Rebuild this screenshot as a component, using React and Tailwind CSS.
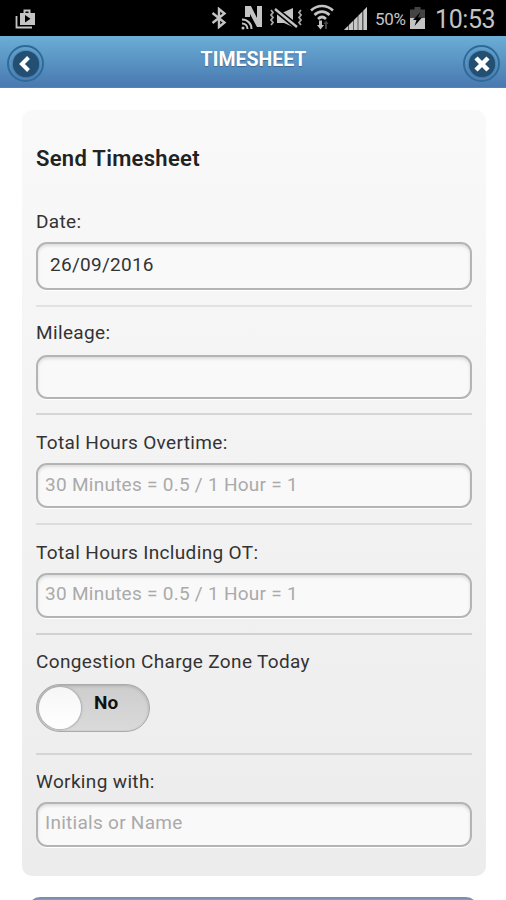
const BluetoothIcon = () => (
  <svg className="w-[16px] h-[22px]" viewBox="0 0 16 22" fill="none" stroke="#c4c4c4" strokeWidth="2.400">
    <path d="M1.500 6 L13.500 15.500 L8 20 V2 L13.500 6.500 L1.500 16" />
  </svg>
);

const NfcIcon = () => (
  <svg className="w-[22px] h-[25px]" viewBox="0 0 22 25">
    <path d="M4 1h6l6 12V1h5v21h-5L9 9v3H4z" fill="#c4c4c4" />
    <g fill="none" stroke="#c4c4c4" strokeWidth="2">
      <path d="M1 14.500c5.500 0 9.500 4 9.500 9.500" />
      <path d="M1 18.500c3.300 0 5.500 2.200 5.500 5.500" />
    </g>
    <circle cx="2" cy="23" r="1.500" fill="#c4c4c4" />
  </svg>
);

const VibrateIcon = () => (
  <svg className="w-[34px] h-[22px]" viewBox="0 0 34 22">
    <path d="M8 4h7l9-4v19l-9-4H8z" fill="#c4c4c4" />
    <path d="M6 1l22 18" stroke="#000" strokeWidth="5.500" />
    <path d="M6 1l22 18" stroke="#c4c4c4" strokeWidth="2.400" />
    <g fill="none" stroke="#a8a8a8" strokeWidth="1.800">
      <path d="M2 2l2 2.500-2 2.500 2 2.500-2 2.500 2 2.500-2 2.500" />
      <path d="M32 2l-2 2.500 2 2.500-2 2.500 2 2.500-2 2.500 2 2.500" />
    </g>
  </svg>
);

const WifiIcon = () => (
  <svg className="w-[24px] h-[26px]" viewBox="0 0 24 26">
    <g fill="none" stroke="#c4c4c4" strokeWidth="2.600">
      <path d="M1 6.500c6.500-6 15.500-6 22 0" />
      <path d="M4.500 11c4.500-4.500 10.500-4.500 15 0" />
      <path d="M8 15c2.500-2.500 5.500-2.500 8 0" />
    </g>
    <path d="M9 16.500h3v4.500h2l-3.500 4.500L7 21h2z" fill="#c4c4c4" />
    <path d="M15 25v-5h-1.500l2.500-3.500 2.500 3.500H17v5z" fill="#444" />
  </svg>
);

const SignalIcon = () => (
  <svg className="w-[24px] h-[24px]" viewBox="0 0 24 24">
    <path d="M0 23L23 0v23z" fill="#5c5c5c" />
    <path d="M0 23l4-4v4zM5 18l4-4v9H5zM10 13l3.500-3.500V23H10zM14.500 8.500L18 5v18h-3.500zM19.500 3.500L23 0v23h-3.500z" fill="#c8c8c8" />
  </svg>
);

const BatteryIcon = () => (
  <svg className="w-[15px] h-[22px]" viewBox="0 0 15 22">
    <path d="M4.500 0h6v2.500H15V11H0V2.500h4.500z" fill="#444" />
    <path d="M0 11h15v11H0z" fill="#c4c4c4" />
    <path d="M10.500 5L3 13h3.500l-2 6 7.500-8.500H8z" fill="#000" />
  </svg>
);

const MediaIcon = () => (
  <svg className="w-[21px] h-[21px]" viewBox="0 0 21 21">
    <path d="M1.500 7v11.500h15.500" fill="none" stroke="#c4c4c4" strokeWidth="1.800" />
    <path d="M9.500 4V1.500h5V4" fill="none" stroke="#c4c4c4" strokeWidth="2" />
    <path d="M5 4h15v12H5z" fill="#c4c4c4" />
    <path d="M10 6v7.500l5.500-3.800z" fill="#000" />
  </svg>
);

const StatusBar = () => (
  <div className="flex h-[36px] items-start bg-black pl-[15px] text-[#c4c4c4]">
    <div className="pt-[9px]"><MediaIcon /></div>
    <div className="ml-[175px] pt-[7px]"><BluetoothIcon /></div>
    <div className="ml-[14px] pt-[5px]"><NfcIcon /></div>
    <div className="ml-[6px] pt-[8px]"><VibrateIcon /></div>
    <div className="ml-[7px] pt-[4px]"><WifiIcon /></div>
    <div className="ml-[10px] pt-[7px]"><SignalIcon /></div>
    <span className="ml-[7px] w-[31px] pt-[7px] text-[17px] leading-[24px] tracking-[-0.3px] whitespace-nowrap">50%</span>
    <div className="ml-[4px] pt-[7px]"><BatteryIcon /></div>
    <span className="ml-[10px] pt-[5px] text-[25px] leading-[30px] tracking-[-0.4px]">10:53</span>
  </div>
);

const RoundButton = ({ label, children }) => (
  <button aria-label={label} className="flex size-[37px] items-center justify-center rounded-full border-2 border-[#2f6b98]">
    <span className="flex size-[26px] items-center justify-center rounded-full bg-[#234f72] shadow-[0_0_2px_#234f72]">
      {children}
    </span>
  </button>
);

const Header = () => (
  <div className="flex h-[52px] justify-between border-b border-[#5b82ab] bg-linear-to-b from-[#6baed6] to-[#4979b0] pl-[7px] pr-[6px] pt-[9px]">
    <RoundButton label="Back">
      <svg className="size-[18px]" viewBox="0 0 18 18" fill="none" stroke="#fff" strokeWidth="4">
        <path d="M11.500 2.500L5 9l6.500 6.500" />
      </svg>
    </RoundButton>
    <h1 className="pt-px text-[19.500px] leading-[28px] font-bold text-white [text-shadow:0_1px_1px_#3e6790]">TIMESHEET</h1>
    <RoundButton label="Close">
      <svg className="size-[18px]" viewBox="0 0 18 18" fill="none" stroke="#fff" strokeWidth="4.500">
        <path d="M3 3l12 12M15 3L3 15" />
      </svg>
    </RoundButton>
  </div>
);

const Label = ({ children }) => (
  <div className="text-[19px] leading-[28px] tracking-[0.35px] text-[#333]">{children}</div>
);

const inputStyle =
  "block w-full rounded-[11px] border-2 border-[#b4b4b4] bg-[#f9f9f9] text-[19px] tracking-[0.27px] text-[#333] placeholder:text-[#aaa] shadow-[inset_0_2px_3px_#ddd,0_1px_0_#fff]";

const App = () => {
  return (
    <div className="h-[900px] w-[506px] overflow-hidden bg-white font-[Roboto,sans-serif]">
      <StatusBar />
      <Header />
      <div className="ml-[22px] mr-[20px] mt-[22px] h-[766px] rounded-[10px] bg-linear-to-b from-[#f9f9f9] to-[#ececec] px-[14px]">
        <h2 className="h-[98px] pt-[34px] text-[22px] leading-[30px] font-semibold tracking-[0.3px] text-[#222]">Send Timesheet</h2>

        <div className="h-[99px] border-b-2 border-[#e2e2e2]">
          <Label>Date:</Label>
          <input className={`${inputStyle} mt-[6px] h-[48px] px-[12px] pb-[4px]`} defaultValue="26/09/2016" />
        </div>
        <div className="h-[108px] border-b-2 border-[#d6d6d6] pt-[12px]">
          <Label>Mileage:</Label>
          <input className={`${inputStyle} mt-[8px] h-[44px] px-[7px]`} />
        </div>
        <div className="h-[110px] border-b-2 border-[#dcdcdc] pt-[14px]">
          <Label>Total Hours Overtime:</Label>
          <input className={`${inputStyle} mt-[6px] h-[45px] px-[7px] pb-[3px]`} placeholder="30 Minutes = 0.5 / 1 Hour = 1" />
        </div>
        <div className="h-[110px] border-b-2 border-[#d2d2d2] pt-[14px]">
          <Label>Total Hours Including OT:</Label>
          <input className={`${inputStyle} mt-[6px] h-[45px] px-[7px] pb-[4px]`} placeholder="30 Minutes = 0.5 / 1 Hour = 1" />
        </div>
        <div className="h-[120px] border-b-2 border-[#d4d4d4] pt-[13px]">
          <Label>Congestion Charge Zone Today</Label>
          <div className="mt-[8px] flex h-[48px] w-[114px] rounded-full border border-[#aaa] bg-linear-to-b from-[#cdcdcd] to-[#dadada] p-[2px] shadow-[inset_0_1px_3px_#aaa]">
            <div className="size-[42px] rounded-full bg-linear-to-b from-[#f6f6f6] to-white shadow-[0_0_2px_1px_#aaa]" />
            <span className="ml-[13px] text-[19px] leading-[32px] font-bold text-[#111]">No</span>
          </div>
        </div>
        <div className="pt-[13px]">
          <Label>Working with:</Label>
          <input className={`${inputStyle} mt-[6px] h-[45px] px-[7px] pb-[4px]`} placeholder="Initials or Name" />
        </div>
      </div>
      <div className="mx-[28px] mt-[21px] h-[47px] rounded-[12px] border-2 border-[#25466f] border-t-[#7d8fae] bg-[#82a0bf]" />
    </div>
  );
};

export default App;
